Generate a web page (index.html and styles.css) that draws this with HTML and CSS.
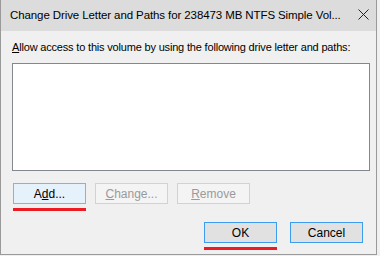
FILE: index.html
```html
<!DOCTYPE html>
<html lang="en">
<head>
    <meta charset="UTF-8">
    <title>Change Drive Letter and Paths</title>
    <link rel="stylesheet" href="styles.css">
</head>
<body>

    <div class="window">
        <div class="titlebar">
            <span class="title">Change Drive Letter and Paths for 238473 MB NTFS Simple Vol...</span>
            <svg class="close" width="11" height="11" viewBox="0 0 11 11">
                <path d="M0.5 0.5 L10.5 10.5 M10.5 0.5 L0.5 10.5" stroke="#222" stroke-width="1" fill="none"/>
            </svg>
        </div>

        <div class="content">
            <p class="label"><u>A</u>llow access to this volume by using the following drive letter and paths:</p>
            <div class="listbox"></div>

            <div class="actions">
                <div class="marked">
                    <button class="btn btn-hot">A<u>d</u>d...</button>
                    <div class="mark"></div>
                </div>
                <button class="btn" disabled><u>C</u>hange...</button>
                <button class="btn" disabled><u>R</u>emove</button>
            </div>

            <div class="footer">
                <div class="marked">
                    <button class="btn btn-default">OK</button>
                    <div class="mark"></div>
                </div>
                <button class="btn btn-default">Cancel</button>
            </div>
        </div>
    </div>

</body>
</html>
```

FILE: styles.css
```css
* {
    box-sizing: border-box;
    margin: 0;
    padding: 0;
}

body {
    font-family: 'Liberation Sans', Arial, sans-serif;
    font-size: 12px;
    color: #000;
    background-color: #f0f0f0;
}

.window {
    width: 377px;
    height: 255px;
    background-color: #f0f0f0;
    border: 1px solid #9a9a9a;
    border-top: none;
    display: flex;
    flex-direction: column;
}

.titlebar {
    height: 31px;
    background-color: #dcdcdc;
    display: flex;
    align-items: center;
    justify-content: space-between;
    padding: 0 7px 2px 9px;
}

.title {
    font-size: 11.5px;
    white-space: nowrap;
    letter-spacing: -0.1px;
}

.close {
    display: block;
}

.content {
    padding: 8px 6px 0 11px;
}

.label {
    font-size: 11px;
    line-height: 16px;
    height: 24px;
    white-space: nowrap;
    letter-spacing: -0.18px;
}

.listbox {
    width: 358px;
    height: 108px;
    background-color: #fff;
    border: 1px solid #828790;
}

.actions {
    display: flex;
    gap: 9px;
    margin-top: 12px;
    padding-left: 1px;
    height: 39px;
}

.footer {
    display: flex;
    justify-content: flex-end;
    gap: 13px;
    padding-right: 7px;
}

.marked {
    display: flex;
    flex-direction: column;
    gap: 4px;
}

.mark {
    height: 3px;
    background-color: #ed1c24;
}

.btn {
    width: 73px;
    height: 21px;
    font-family: inherit;
    font-size: 12px;
    color: #000;
    background-color: #e1e1e1;
    border: 1px solid #adadad;
    border-radius: 0;
}

.btn-hot {
    background-color: #e5f1fb;
    border-color: #7eb4ea;
}

.btn:disabled {
    color: #9a9a9a;
    background-color: #f4f4f4;
    border-color: #d2d2d2;
}

.btn-default {
    border-color: #3c9cf0;
}
```
